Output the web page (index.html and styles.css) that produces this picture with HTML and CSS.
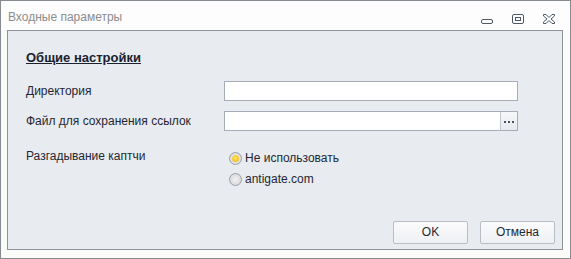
FILE: index.html
```html
<!DOCTYPE html>
<html>
<head>
<meta charset="utf-8">
<link rel="stylesheet" href="styles.css">
</head>
<body>
<div class="window">
  <div class="titlebar">
    <span class="title">Входные параметры</span>
    <div class="controls">
      <svg class="ctl" width="14" height="14" viewBox="0 0 14 14"><rect x="1.5" y="7.5" width="11" height="4" rx="1.5" fill="none" stroke="#4e5866" stroke-width="1"/></svg>
      <svg class="ctl" width="14" height="14" viewBox="0 0 14 14"><rect x="1.5" y="2.5" width="11" height="9" rx="1.5" fill="none" stroke="#4e5866" stroke-width="1"/><rect x="4.5" y="5.5" width="5" height="3" fill="none" stroke="#4e5866" stroke-width="1"/></svg>
      <svg class="ctl" width="14" height="14" viewBox="0 0 14 14"><path d="M1.5 2.5 L4 2.5 L7 5.5 L10 2.5 L12.5 2.5 L12.5 4 L9 7 L12.5 10 L12.5 11.5 L10 11.5 L7 8.5 L4 11.5 L1.5 11.5 L1.5 10 L5 7 L1.5 4 Z" fill="none" stroke="#4e5866" stroke-width="1" stroke-linejoin="round"/></svg>
    </div>
  </div>
  <div class="panel">
    <div class="heading">Общие настройки</div>
    <div class="row row-dir">
      <div class="label">Директория</div>
      <div class="input"></div>
    </div>
    <div class="row row-file">
      <div class="label">Файл для сохранения ссылок</div>
      <div class="input file"><div class="field"></div><div class="browse"><i></i><i></i><i></i></div></div>
    </div>
    <div class="row row-captcha">
      <div class="label">Разгадывание каптчи</div>
      <div class="radios">
        <div class="radio-item"><span class="radio checked"></span><span>Не использовать</span></div>
        <div class="radio-item"><span class="radio"></span><span>antigate.com</span></div>
      </div>
    </div>
    <div class="spacer"></div>
    <div class="buttons">
      <div class="btn">OK</div>
      <div class="btn">Отмена</div>
    </div>
  </div>
</div>
</body>
</html>
```
FILE: styles.css
```css
html, body { margin: 0; padding: 0; background: #ffffff; }
body { font-family: "Liberation Sans", "DejaVu Sans", sans-serif; font-size: 12px; color: #1f2733; }
.window {
  width: 571px; height: 259px; box-sizing: border-box;
  border: 1px solid #868a91; background: #fbfbfa;
  display: flex; flex-direction: column;
}
.titlebar {
  height: 29px; background: #fdfdfd; display: flex; align-items: center;
  justify-content: space-between; padding: 0 0 0 7px;
}
.title { color: #8c8c8c; font-size: 12px; padding-top: 2px; }
.controls { display: flex; gap: 17px; margin-right: 14px; margin-top: 6px; }
.ctl { display: block; }
.panel {
  margin: 0 7px 8px 6px; flex: 1; border: 1px solid #8e929a; background: #e8ebf0;
  display: flex; flex-direction: column; padding: 0 7px 5px 18px;
}
.heading {
  font-weight: bold; font-size: 13px; text-decoration: underline; color: #1a2230;
  margin-top: 19px; height: 16px; line-height: 16px;
}
.row { display: flex; }
.label { width: 198px; flex: none; }
.row-dir { margin-top: 15px; height: 20px; align-items: center; }
.row-file { margin-top: 10px; height: 20px; align-items: center; }
.row-captcha { margin-top: 16px; }
.row-captcha .label { padding-top: 2px; }
.input {
  width: 294px; height: 20px; box-sizing: border-box; border: 1px solid #a7adb7; background: #fff;
}
.input.file { display: flex; }
.field { flex: 1; }
.browse {
  width: 16px; border-left: 1px solid #c3c8d0; background: linear-gradient(#f7f8fa, #e6e9ee);
  display: flex; justify-content: center; align-items: center; gap: 2px; padding-top: 1px;
}
.browse i { display: block; width: 2px; height: 2px; background: #4a5260; }
.radios { display: flex; flex-direction: column; gap: 7px; padding-top: 4px; padding-left: 5px; }
.radio-item { display: flex; align-items: center; gap: 3px; height: 14px; }
.radio {
  width: 13px; height: 13px; box-sizing: border-box; border-radius: 50%;
  border: 1px solid #9aa0a8; background: radial-gradient(circle, #f2f2f2 0, #dcdcdc 70%);
  position: relative;
}
.radio.checked::after {
  content: ""; position: absolute; left: 2px; top: 2px; width: 7px; height: 7px; border-radius: 50%;
  background: radial-gradient(circle at 45% 40%, #ffe36a, #f1b400);
}
.spacer { flex: 1; }
.buttons { display: flex; justify-content: flex-end; gap: 12px; }
.btn {
  width: 75px; height: 23px; box-sizing: border-box; border: 1px solid #b9bec6; border-radius: 2px;
  background: linear-gradient(#fbfbfc, #eef0f3); text-align: center; line-height: 21px; color: #1f2733;
}
```
